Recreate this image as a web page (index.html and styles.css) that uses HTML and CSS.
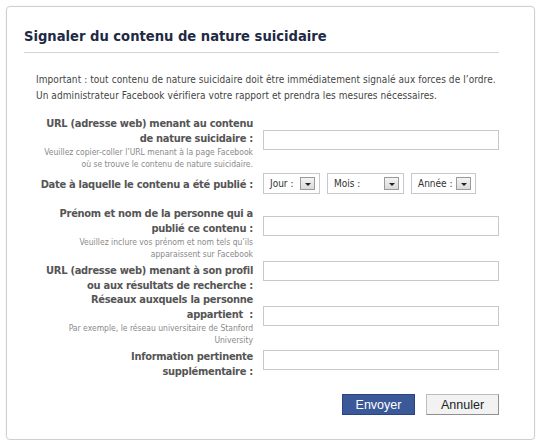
FILE: index.html
```html
<!DOCTYPE html>
<html lang="fr">
<head>
<meta charset="utf-8">
<title>Signaler du contenu de nature suicidaire</title>
<link rel="stylesheet" href="styles.css">
</head>
<body>
<div class="dialog">
  <h1 class="title">Signaler du contenu de nature suicidaire</h1>
  <p class="intro">Important : tout contenu de nature suicidaire doit être immédiatement signalé aux forces de l’ordre.<br>Un administrateur Facebook vérifiera votre rapport et prendra les mesures nécessaires.</p>
  <div class="form">
    <div class="row row1">
      <div class="label">
        <div class="main">URL (adresse web) menant au contenu<br>de nature suicidaire :</div>
        <div class="hint">Veuillez copier-coller l’URL menant à la page Facebook<br>où se trouve le contenu de nature suicidaire.</div>
      </div>
      <div class="field"><div class="input"></div></div>
    </div>
    <div class="row row2">
      <div class="label">
        <div class="main">Date à laquelle le contenu a été publié :</div>
      </div>
      <div class="field selects">
        <div class="select s-day"><span>Jour :</span><span class="arrow"></span></div>
        <div class="select s-month"><span>Mois :</span><span class="arrow"></span></div>
        <div class="select s-year"><span>Année :</span><span class="arrow"></span></div>
      </div>
    </div>
    <div class="row row3">
      <div class="label">
        <div class="main">Prénom et nom de la personne qui a<br>publié ce contenu :</div>
        <div class="hint">Veuillez inclure vos prénom et nom tels qu’ils<br>apparaissent sur Facebook</div>
      </div>
      <div class="field"><div class="input"></div></div>
    </div>
    <div class="row row4">
      <div class="label">
        <div class="main">URL (adresse web) menant à son profil<br>ou aux résultats de recherche :</div>
      </div>
      <div class="field"><div class="input"></div></div>
    </div>
    <div class="row row5">
      <div class="label">
        <div class="main">Réseaux auxquels la personne<br>appartient &nbsp;:</div>
        <div class="hint">Par exemple, le réseau universitaire de Stanford<br>University</div>
      </div>
      <div class="field"><div class="input"></div></div>
    </div>
    <div class="row row6">
      <div class="label">
        <div class="main">Information pertinente<br>supplémentaire :</div>
      </div>
      <div class="field"><div class="input"></div></div>
    </div>
  </div>
  <div class="buttons">
    <button class="btn btn-primary" type="button">Envoyer</button>
    <button class="btn btn-secondary" type="button">Annuler</button>
  </div>
</div>
</body>
</html>
```
FILE: styles.css
```css
html, body {
  margin: 0;
  padding: 0;
  background: #ffffff;
}
body {
  font-family: "DejaVu Sans Condensed", "DejaVu Sans", sans-serif;
  font-stretch: condensed;
  color: #333333;
}
.dialog {
  box-sizing: border-box;
  margin: 6px 0 0 6px;
  width: 529px;
  height: 434px;
  border: 1px solid #cfcfcf;
  border-radius: 4px;
  box-shadow: 0 0 2px rgba(0,0,0,0.08);
  padding: 20px 35px 0 17px;
}
.title {
  margin: 0;
  font-size: 14.6px;
  line-height: 18px;
  font-weight: bold;
  color: #1e2a44;
  padding-bottom: 7px;
  border-bottom: 1px solid #d4d4d4;
}
.intro {
  margin: 19px 0 0 12px;
  font-size: 10px;
  letter-spacing: 0.07px;
  line-height: 16px;
  color: #444;
}
.form {
  margin-top: 12px;
}
.row {
  display: flex;
  align-items: flex-start;
}
.label {
  box-sizing: border-box;
  width: 229px;
  text-align: right;
}
.main {
  font-size: 11px;
  letter-spacing: -0.28px;
  line-height: 15px;
  font-weight: bold;
  color: #555555;
}
.hint {
  font-size: 8.5px;
  line-height: 12px;
  color: #8a8a8a;
}
.field {
  margin-left: 10px;
}
.input {
  box-sizing: border-box;
  width: 236px;
  height: 20px;
  border: 1px solid #c6c9ce;
  background: #fff;
}
.row1 .field { margin-top: 14px; }
.row2 { margin-top: 3px; }
.row2 .label { padding-top: 4px; }
.row3 { margin-top: 12px; }
.row3 .field { margin-top: 10px; }
.row4 { margin-top: 1px; }
.row4 .label { padding-top: 2px; }
.row5 { margin-top: -1px; }
.row5 .field { margin-top: 14px; }
.row6 { margin-top: 3px; }
.row6 .field { margin-top: 1px; }

.selects {
  display: flex;
  gap: 7px;
}
.select {
  box-sizing: border-box;
  height: 21px;
  border: 1px solid #c6c9ce;
  display: flex;
  align-items: center;
  justify-content: space-between;
  padding: 0 4px 0 6px;
  font-size: 10px;
  color: #333;
}
.s-day { width: 57px; }
.s-month { width: 77px; }
.s-year { width: 65px; }
.arrow {
  box-sizing: border-box;
  width: 15px;
  height: 13px;
  border: 1px solid #9a9a9a;
  background: linear-gradient(#f4f4f4, #d9d9d9);
  display: flex;
  align-items: center;
  justify-content: center;
}
.arrow::after {
  content: "";
  display: block;
  margin-top: 2px;
  border-left: 3px solid transparent;
  border-right: 3px solid transparent;
  border-top: 3px solid #222;
}
.buttons {
  display: flex;
  justify-content: flex-end;
  gap: 11px;
  margin-top: 15px;
}
.btn {
  box-sizing: border-box;
  width: 73px;
  height: 21px;
  margin: 0;
  padding: 0;
  font-family: "Liberation Sans", Arial, sans-serif;
  font-stretch: normal;
  font-size: 12.5px;
}
.btn-primary {
  background: #3b5998;
  border: 1px solid #29447e;
  color: #fff;
}
.btn-secondary {
  background: #f2f2f2;
  border: 1px solid #bdbdbd;
  border-right-color: #8f8f8f;
  border-bottom-color: #8f8f8f;
  color: #222;
}
```
